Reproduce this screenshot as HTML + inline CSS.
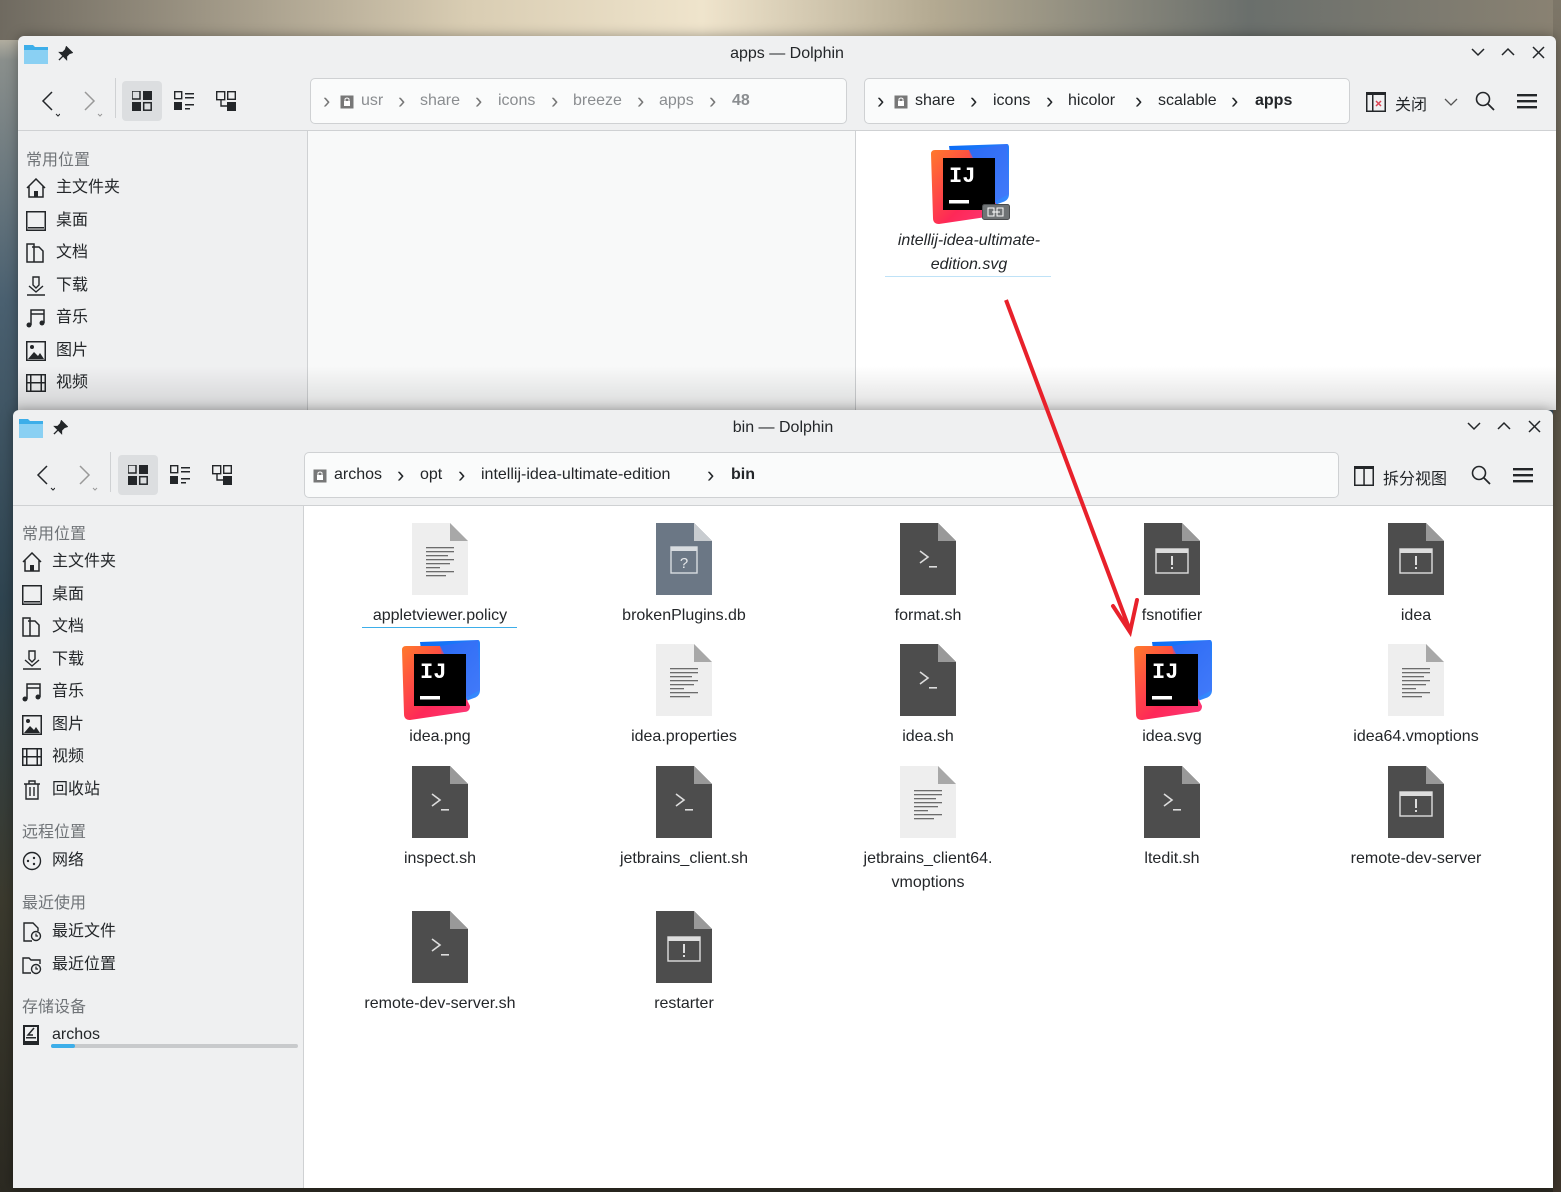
<!DOCTYPE html>
<html><head><meta charset="utf-8">
<style>
*{box-sizing:border-box;margin:0;padding:0}
body{width:1561px;height:1192px;overflow:hidden;position:relative;font-family:"Liberation Sans","Noto Sans CJK SC",sans-serif;color:#232629;
background:linear-gradient(180deg,#b9a78a 0px,#d8cbb2 20px,#8a8f8c 60px,#4a6070 300px,#2f4450 600px,#3b3a2e 900px,#2c2a22 1192px);}
.abs{position:absolute}
.win{position:absolute;background:#eff0f1;border-radius:6px 6px 0 0;overflow:hidden;box-shadow:0 0 12px rgba(0,0,0,.35)}
.title{position:absolute;left:0;right:0;top:0;height:36px;text-align:center;line-height:36px;font-size:16px;color:#232629}
.sec{position:absolute;font-size:16px;color:#707478}
.it{position:absolute;font-size:16px;color:#232629;height:24px;line-height:24px}
.it svg{position:absolute;left:-30px;top:2px}
.crumb{position:absolute;border:1px solid #cfd1d3;border-radius:5px;background:#fafbfb;font-size:16px}
.crumb span{position:absolute;top:13px}
.crumb span.chev{top:9px;font-size:22px;color:#777}
.lbl{position:absolute;width:240px;text-align:center;font-size:16px;color:#232629;line-height:24px}
.ic{position:absolute}
</style></head><body>
<svg width="0" height="0" style="position:absolute">
<defs>
<linearGradient id="gb" x1="0" y1="0" x2="1" y2="1"><stop offset="0" stop-color="#0b6cf5"/><stop offset="1" stop-color="#3c8dff"/></linearGradient>
<linearGradient id="gr" x1="0" y1="0" x2="1" y2="1"><stop offset="0" stop-color="#ff7a2b"/><stop offset=".6" stop-color="#fe2857"/><stop offset="1" stop-color="#fc3a7a"/></linearGradient>
<symbol id="ij" viewBox="0 0 80 80">
<path d="M20 2 L78 0 Q80 0 80 4 L80 50 Q80 56 74 58 L30 74 Z" fill="url(#gb)"/>
<path d="M2 10 Q2 6 6 6 L40 6 L70 66 Q70 72 64 72 L10 80 Q4 80 4 74 Z" fill="url(#gr)"/>
<path d="M40 6 L78 0 L80 50 L50 66 Z" fill="#5a5ff0" opacity=".35"/>
<rect x="14" y="14" width="52" height="52" fill="#000"/>
<text x="20" y="38" font-family="Liberation Mono,monospace" font-weight="bold" font-size="22" fill="#fff">IJ</text>
<rect x="20" y="56" width="20" height="3.5" fill="#fff"/>
</symbol>
<symbol id="txt" viewBox="0 0 56 72">
<path d="M0 0 H38 L56 18 V72 H0 Z" fill="#eeeeee"/><path d="M38 0 L56 18 H38 Z" fill="#a8a8a8"/>
<g fill="#6c6c6c"><rect x="14" y="24" width="28" height="1.3"/><rect x="14" y="28" width="28" height="1.3"/><rect x="14" y="32" width="22" height="1.3"/><rect x="14" y="36" width="28" height="1.3"/><rect x="14" y="40" width="24" height="1.3"/><rect x="14" y="44" width="14" height="1.3"/><rect x="14" y="48" width="28" height="1.3"/><rect x="14" y="52" width="20" height="1.3"/></g>
</symbol>
<symbol id="sh" viewBox="0 0 56 72">
<path d="M0 0 H38 L56 18 V72 H0 Z" fill="#4d4d4d"/><path d="M38 0 L56 18 H38 Z" fill="#999"/>
<path d="M20 28 L28 34 L20 40" stroke="#ddd" stroke-width="1.6" fill="none"/><rect x="29" y="43" width="8" height="1.6" fill="#ddd"/>
</symbol>
<symbol id="exe" viewBox="0 0 56 72">
<path d="M0 0 H38 L56 18 V72 H0 Z" fill="#4d4d4d"/><path d="M38 0 L56 18 H38 Z" fill="#999"/>
<rect x="12" y="26" width="32" height="24" fill="none" stroke="#ddd" stroke-width="1.4"/><rect x="12" y="26" width="32" height="4" fill="#ddd"/>
<rect x="27" y="33" width="2" height="9" fill="#ddd"/><rect x="27" y="44" width="2" height="2" fill="#ddd"/>
</symbol>
<symbol id="db" viewBox="0 0 56 72">
<path d="M0 0 H38 L56 18 V72 H0 Z" fill="#6b7785"/><path d="M38 0 L56 18 H38 Z" fill="#c8ccd0"/>
<rect x="15" y="24" width="26" height="26" fill="none" stroke="#d8dce0" stroke-width="1.4"/><rect x="15" y="24" width="26" height="4" fill="#d8dce0"/>
<text x="28" y="45" font-size="15" text-anchor="middle" fill="#e6e8ea" font-family="Liberation Sans">?</text>
</symbol>
<symbol id="folder" viewBox="0 0 24 20"><path d="M0 1 H9 L11 3 H24 V20 H0Z" fill="#3daee9"/><path d="M0 6 H24 V20 H0Z" fill="#8ad0f3"/></symbol>
<symbol id="pin" viewBox="0 0 16 16"><path d="M9 1 L15 7 L12 8 L9 11 L9 14 L2 7 L5 7 L8 4 Z M5 11 L1 15" stroke="#232629" stroke-width="1.5" fill="#232629"/></symbol>
<symbol id="iconsv" viewBox="0 0 20 20"><rect x="0" y="0" width="8" height="8" fill="none" stroke="#232629" stroke-width="1.5"/><rect x="11" y="0" width="9" height="9" fill="#232629"/><rect x="0" y="11" width="9" height="9" fill="#232629"/><rect x="11.7" y="11.7" width="7.5" height="7.5" fill="none" stroke="#232629" stroke-width="1.5"/></symbol>
<symbol id="compv" viewBox="0 0 20 20"><rect x=".7" y=".7" width="7" height="7" fill="none" stroke="#232629" stroke-width="1.4"/><rect x="0" y="11" width="8" height="8" fill="#232629"/><rect x="11" y="2" width="9" height="1.5" fill="#232629"/><rect x="11" y="6" width="9" height="1.5" fill="#232629"/><rect x="11" y="13" width="9" height="1.5" fill="#232629"/><rect x="11" y="17" width="5" height="1.5" fill="#232629"/></symbol>
<symbol id="treev" viewBox="0 0 20 20"><rect x=".7" y=".7" width="8" height="8" fill="none" stroke="#232629" stroke-width="1.4"/><rect x="11.7" y=".7" width="7.6" height="7.6" fill="none" stroke="#232629" stroke-width="1.4"/><rect x="11" y="11" width="9" height="9" fill="#232629"/><path d="M5 9 V15 H11" stroke="#232629" stroke-width="1.4" fill="none"/></symbol>
<symbol id="ham" viewBox="0 0 20 16"><rect y="1" width="20" height="2.4" fill="#232629"/><rect y="7" width="20" height="2.4" fill="#232629"/><rect y="13" width="20" height="2.4" fill="#232629"/></symbol>
<symbol id="srch" viewBox="0 0 20 20"><circle cx="8" cy="8" r="6.5" fill="none" stroke="#232629" stroke-width="1.6"/><path d="M13 13 L19 19" stroke="#232629" stroke-width="1.8"/></symbol>
<symbol id="lock" viewBox="0 0 14 14"><rect x=".5" y=".5" width="13" height="13" fill="#777"/><rect x="4" y="6" width="6" height="5" fill="#fff"/><path d="M5 6 V4 Q7 2 9 4 V6" stroke="#fff" fill="none"/></symbol>
<symbol id="home" viewBox="0 0 20 20"><path d="M1 10 L10 1 L19 10 M3 8 V19 H17 V8" stroke="#232629" stroke-width="1.5" fill="none"/><rect x="8" y="13" width="4" height="6" fill="#232629"/></symbol>
<symbol id="desk" viewBox="0 0 20 20"><rect x=".75" y=".75" width="18.5" height="18.5" fill="none" stroke="#232629" stroke-width="1.5"/><rect x="2" y="16" width="16" height="1.5" fill="#232629"/></symbol>
<symbol id="doc" viewBox="0 0 20 20"><path d="M1 1 H8 V19 H1Z M6 4 H13 L17 8 V19 H6" stroke="#232629" stroke-width="1.5" fill="none"/></symbol>
<symbol id="dl" viewBox="0 0 20 20"><path d="M7 1 H13 V9 L10 12 L7 9 Z M1 19 H19 M3 10 L10 16 L17 10" stroke="#232629" stroke-width="1.4" fill="none"/></symbol>
<symbol id="mus" viewBox="0 0 20 20"><path d="M5 17 V2 H18 V15 M5 6 H18" stroke="#232629" stroke-width="1.5" fill="none"/><circle cx="3" cy="17" r="2.5" fill="#232629"/><circle cx="16" cy="15" r="2.5" fill="#232629"/></symbol>
<symbol id="pic" viewBox="0 0 20 20"><rect x=".75" y=".75" width="18.5" height="18.5" fill="none" stroke="#232629" stroke-width="1.5"/><circle cx="6" cy="6" r="2" fill="#232629"/><path d="M2 18 L8 11 L12 15 L14 12 L18 18Z" fill="#232629"/></symbol>
<symbol id="vid" viewBox="0 0 20 20"><rect x=".75" y="1.75" width="18.5" height="16.5" fill="none" stroke="#232629" stroke-width="1.5"/><rect x="0" y="9" width="20" height="1.5" fill="#232629"/><rect x="4" y="1" width="1.5" height="18" fill="#232629"/><rect x="14.5" y="1" width="1.5" height="18" fill="#232629"/></symbol>
<symbol id="trash" viewBox="0 0 20 20"><path d="M4 4 V19 H16 V4 M2 4 H18 M7 4 V1 H13 V4 M8 7 V16 M12 7 V16" stroke="#232629" stroke-width="1.4" fill="none"/></symbol>
<symbol id="net" viewBox="0 0 20 20"><circle cx="10" cy="10" r="8.5" fill="none" stroke="#232629" stroke-width="1.4"/><circle cx="6" cy="10" r="1.2" fill="#232629"/><circle cx="12" cy="7" r="1.2" fill="#232629"/><circle cx="12" cy="13" r="1.2" fill="#232629"/></symbol>
<symbol id="recf" viewBox="0 0 20 20"><path d="M10 19 H2 V1 H11 L16 6 V9" stroke="#232629" stroke-width="1.4" fill="none"/><circle cx="14" cy="14" r="4.5" fill="none" stroke="#232629" stroke-width="1.4"/><path d="M14 11.5 V14 H16" stroke="#232629" stroke-width="1.2" fill="none"/></symbol>
<symbol id="recl" viewBox="0 0 20 20"><path d="M9 18 H1 V3 H7 L9 5 H18 V9" stroke="#232629" stroke-width="1.4" fill="none"/><circle cx="14" cy="14" r="4.5" fill="none" stroke="#232629" stroke-width="1.4"/><path d="M14 11.5 V14 H16" stroke="#232629" stroke-width="1.2" fill="none"/></symbol>
<symbol id="hdd" viewBox="0 0 18 22"><rect x="1" y="1" width="16" height="20" fill="#232629"/><rect x="3" y="3" width="12" height="14" fill="#eff0f1"/><path d="M12 4 L6 11 H11" stroke="#232629" stroke-width="1.5" fill="none"/><rect x="4" y="13" width="10" height="1.5" fill="#232629"/></symbol>
<symbol id="split" viewBox="0 0 20 20"><rect x=".75" y=".75" width="18.5" height="18.5" fill="none" stroke="#232629" stroke-width="1.5"/><rect x="9.3" y="0" width="1.5" height="20" fill="#232629"/><rect x="0" y="0" width="20" height="3" fill="#232629"/></symbol>
<symbol id="close2" viewBox="0 0 20 20"><rect x=".75" y=".75" width="18.5" height="18.5" fill="none" stroke="#232629" stroke-width="1.5"/><rect x="0" y="0" width="20" height="3" fill="#232629"/><rect x="6" y="0" width="1.5" height="20" fill="#232629"/><path d="M10 9 L15 14 M15 9 L10 14" stroke="#da4453" stroke-width="1.5"/></symbol>
</defs></svg>

<div class="abs" style="left:0;top:0;width:1561px;height:40px;background:linear-gradient(90deg,#6f6a60,#d9cdb3 30%,#efe4cc 45%,#b3a991 60%,#6a6f6c 80%,#8a8272);"></div>
<div class="abs" style="left:1553px;top:0;width:8px;height:1192px;background:linear-gradient(180deg,#7d7668,#5d574a 400px,#5b5040 800px,#3d352b)"></div>

<!-- WINDOW 1 -->
<div class="win" style="left:18px;top:36px;width:1538px;height:374px;">
  <svg class="abs" style="left:6px;top:8px" width="24" height="20"><use href="#folder"/></svg>
  <svg class="abs" style="left:40px;top:10px" width="15" height="15"><use href="#pin"/></svg>
  <div class="title">apps — Dolphin</div>
  <svg class="abs" style="left:1453px;top:12px" width="14" height="10"><path d="M1 1 L7 7 L13 1" stroke="#232629" stroke-width="1.5" fill="none"/></svg>
  <svg class="abs" style="left:1483px;top:10px" width="14" height="12"><path d="M1 9 L7 3 L13 9" stroke="#232629" stroke-width="1.5" fill="none"/></svg>
  <svg class="abs" style="left:1514px;top:10px" width="13" height="13"><path d="M1 1 L12 12 M12 1 L1 12" stroke="#232629" stroke-width="1.5"/></svg>
  <svg class="abs" style="left:22px;top:54px" width="20" height="30"><path d="M12 2 L3 11 L12 20" stroke="#232629" stroke-width="1.5" fill="none"/><path d="M16 24 L18 26 L20 24" stroke="#232629" fill="none"/></svg>
  <svg class="abs" style="left:64px;top:54px" width="22" height="30"><path d="M3 2 L12 11 L3 20" stroke="#999" stroke-width="1.5" fill="none"/><path d="M16 24 L18 26 L20 24" stroke="#999" fill="none"/></svg>
  <div class="abs" style="left:97px;top:42px;width:1px;height:40px;background:#cfd1d3"></div>
  <div class="abs" style="left:104px;top:45px;width:40px;height:40px;background:#dcdee0;border-radius:4px"></div>
  <svg class="abs" style="left:114px;top:55px" width="20" height="20"><use href="#iconsv"/></svg>
  <svg class="abs" style="left:156px;top:55px" width="20" height="20"><use href="#compv"/></svg>
  <svg class="abs" style="left:198px;top:55px" width="20" height="20"><use href="#treev"/></svg>
  <div class="crumb" style="left:292px;top:42px;width:537px;height:46px;color:#8a8d90">
    <span class="chev" style="left:12px">›</span><svg class="abs" style="left:29px;top:16px" width="14" height="14"><use href="#lock"/></svg>
    <span style="left:50px">usr</span><span class="chev" style="left:87px">›</span><span style="left:109px">share</span><span class="chev" style="left:164px">›</span><span style="left:187px">icons</span><span class="chev" style="left:240px">›</span><span style="left:262px">breeze</span><span class="chev" style="left:326px">›</span><span style="left:348px">apps</span><span class="chev" style="left:398px">›</span><span style="left:421px;font-weight:bold">48</span>
  </div>
  <div class="crumb" style="left:846px;top:42px;width:486px;height:46px;color:#232629">
    <span class="chev" style="left:12px;color:#232629">›</span><svg class="abs" style="left:29px;top:16px" width="14" height="14"><use href="#lock"/></svg>
    <span style="left:50px">share</span><span class="chev" style="left:105px;color:#232629">›</span><span style="left:128px">icons</span><span class="chev" style="left:181px;color:#232629">›</span><span style="left:203px">hicolor</span><span class="chev" style="left:270px;color:#232629">›</span><span style="left:293px">scalable</span><span class="chev" style="left:366px;color:#232629">›</span><span style="left:390px;font-weight:bold">apps</span>
  </div>
  <svg class="abs" style="left:1348px;top:56px" width="20" height="20"><use href="#close2"/></svg>
  <div class="abs" style="left:1377px;top:55px;font-size:16px">关闭</div>
  <svg class="abs" style="left:1426px;top:62px" width="14" height="9"><path d="M1 1 L7 7 L13 1" stroke="#555" stroke-width="1.3" fill="none"/></svg>
  <svg class="abs" style="left:1457px;top:55px" width="20" height="20"><use href="#srch"/></svg>
  <svg class="abs" style="left:1499px;top:57px" width="20" height="16"><use href="#ham"/></svg>
  <div class="abs" style="left:0;top:94px;width:1538px;height:1px;background:#cfd1d3"></div>
  <div class="sec" style="left:8px;top:110px">常用位置</div>
  <div class="it" style="left:38px;top:140px"><svg width="20" height="20"><use href="#home"/></svg>主文件夹</div>
  <div class="it" style="left:38px;top:173px"><svg width="20" height="20"><use href="#desk"/></svg>桌面</div>
  <div class="it" style="left:38px;top:205px"><svg width="20" height="20"><use href="#doc"/></svg>文档</div>
  <div class="it" style="left:38px;top:238px"><svg width="20" height="20"><use href="#dl"/></svg>下载</div>
  <div class="it" style="left:38px;top:270px"><svg width="20" height="20"><use href="#mus"/></svg>音乐</div>
  <div class="it" style="left:38px;top:303px"><svg width="20" height="20"><use href="#pic"/></svg>图片</div>
  <div class="it" style="left:38px;top:335px"><svg width="20" height="20"><use href="#vid"/></svg>视频</div>
  <div class="abs" style="left:289px;top:95px;width:1px;height:279px;background:#cfd1d3"></div>
  <div class="abs" style="left:290px;top:95px;width:547px;height:279px;background:#f8f9f9"></div>
  <div class="abs" style="left:837px;top:95px;width:1px;height:279px;background:#cfd1d3"></div>
  <div class="abs" style="left:838px;top:95px;width:700px;height:279px;background:#fff"></div>
  <svg class="ic" style="left:911px;top:108px" width="80" height="80"><use href="#ij"/></svg>
  <svg class="abs" style="left:964px;top:168px" width="28" height="16"><rect x=".5" y=".5" width="27" height="15" rx="2" fill="#6f7375" stroke="#4a4d4f"/><rect x="6" y="4" width="6" height="8" fill="none" stroke="#fff"/><rect x="15" y="4" width="6" height="8" fill="none" stroke="#fff"/><path d="M10 8 H18" stroke="#fff"/></svg>
  <div class="lbl" style="left:831px;top:193px;font-style:italic;width:240px">intellij-idea-ultimate-<br>edition.svg</div>
  <div class="abs" style="left:867px;top:240px;width:166px;height:1px;background:#bfe2f7"></div>
  <div class="abs" style="left:0;top:330px;width:1538px;height:44px;background:linear-gradient(180deg,rgba(0,0,0,0),rgba(0,0,0,.12))"></div>
</div>

<!-- WINDOW 2 -->
<div class="win" style="left:13px;top:410px;width:1540px;height:778px;">
  <svg class="abs" style="left:6px;top:8px" width="24" height="20"><use href="#folder"/></svg>
  <svg class="abs" style="left:40px;top:10px" width="15" height="15"><use href="#pin"/></svg>
  <div class="title">bin — Dolphin</div>
  <svg class="abs" style="left:1454px;top:12px" width="14" height="10"><path d="M1 1 L7 7 L13 1" stroke="#232629" stroke-width="1.5" fill="none"/></svg>
  <svg class="abs" style="left:1484px;top:10px" width="14" height="12"><path d="M1 9 L7 3 L13 9" stroke="#232629" stroke-width="1.5" fill="none"/></svg>
  <svg class="abs" style="left:1515px;top:10px" width="13" height="13"><path d="M1 1 L12 12 M12 1 L1 12" stroke="#232629" stroke-width="1.5"/></svg>
  <svg class="abs" style="left:22px;top:54px" width="20" height="30"><path d="M12 2 L3 11 L12 20" stroke="#232629" stroke-width="1.5" fill="none"/><path d="M16 24 L18 26 L20 24" stroke="#232629" fill="none"/></svg>
  <svg class="abs" style="left:64px;top:54px" width="22" height="30"><path d="M3 2 L12 11 L3 20" stroke="#999" stroke-width="1.5" fill="none"/><path d="M16 24 L18 26 L20 24" stroke="#999" fill="none"/></svg>
  <div class="abs" style="left:97px;top:42px;width:1px;height:40px;background:#cfd1d3"></div>
  <div class="abs" style="left:105px;top:45px;width:40px;height:40px;background:#dcdee0;border-radius:4px"></div>
  <svg class="abs" style="left:115px;top:55px" width="20" height="20"><use href="#iconsv"/></svg>
  <svg class="abs" style="left:157px;top:55px" width="20" height="20"><use href="#compv"/></svg>
  <svg class="abs" style="left:199px;top:55px" width="20" height="20"><use href="#treev"/></svg>
  <div class="crumb" style="left:291px;top:42px;width:1035px;height:46px;color:#232629">
    <svg class="abs" style="left:8px;top:16px" width="14" height="14"><use href="#lock"/></svg>
    <span style="left:29px">archos</span><span class="chev" style="left:92px;color:#232629">›</span><span style="left:115px">opt</span><span class="chev" style="left:153px;color:#232629">›</span><span style="left:176px">intellij-idea-ultimate-edition</span><span class="chev" style="left:402px;color:#232629">›</span><span style="left:426px;font-weight:bold">bin</span>
  </div>
  <svg class="abs" style="left:1341px;top:56px" width="20" height="20"><use href="#split"/></svg>
  <div class="abs" style="left:1370px;top:55px;font-size:16px">拆分视图</div>
  <svg class="abs" style="left:1458px;top:55px" width="20" height="20"><use href="#srch"/></svg>
  <svg class="abs" style="left:1500px;top:57px" width="20" height="16"><use href="#ham"/></svg>
  <div class="abs" style="left:0;top:95px;width:1540px;height:1px;background:#cfd1d3"></div>
  <div class="sec" style="left:9px;top:110px">常用位置</div>
  <div class="it" style="left:39px;top:140px"><svg width="20" height="20"><use href="#home"/></svg>主文件夹</div>
  <div class="it" style="left:39px;top:173px"><svg width="20" height="20"><use href="#desk"/></svg>桌面</div>
  <div class="it" style="left:39px;top:205px"><svg width="20" height="20"><use href="#doc"/></svg>文档</div>
  <div class="it" style="left:39px;top:238px"><svg width="20" height="20"><use href="#dl"/></svg>下载</div>
  <div class="it" style="left:39px;top:270px"><svg width="20" height="20"><use href="#mus"/></svg>音乐</div>
  <div class="it" style="left:39px;top:303px"><svg width="20" height="20"><use href="#pic"/></svg>图片</div>
  <div class="it" style="left:39px;top:335px"><svg width="20" height="20"><use href="#vid"/></svg>视频</div>
  <div class="it" style="left:39px;top:368px"><svg width="20" height="20"><use href="#trash"/></svg>回收站</div>
  <div class="sec" style="left:9px;top:408px">远程位置</div>
  <div class="it" style="left:39px;top:439px"><svg width="20" height="20"><use href="#net"/></svg>网络</div>
  <div class="sec" style="left:9px;top:479px">最近使用</div>
  <div class="it" style="left:39px;top:510px"><svg width="20" height="20"><use href="#recf"/></svg>最近文件</div>
  <div class="it" style="left:39px;top:543px"><svg width="20" height="20"><use href="#recl"/></svg>最近位置</div>
  <div class="sec" style="left:9px;top:583px">存储设备</div>
  <div class="it" style="left:39px;top:613px"><svg width="18" height="22" style="top:1px"><use href="#hdd"/></svg>archos</div>
  <div class="abs" style="left:38px;top:634px;width:247px;height:4px;border-radius:2px;background:#c8cacc"></div>
  <div class="abs" style="left:38px;top:634px;width:24px;height:4px;border-radius:2px;background:#3daee9"></div>
  <div class="abs" style="left:290px;top:96px;width:1px;height:682px;background:#cfd1d3"></div>
  <div class="abs" style="left:291px;top:96px;width:1249px;height:682px;background:#fff"></div>
</div>

<svg class="ic" style="left:412px;top:523px" width="56" height="72"><use href="#txt"/></svg>
<div class="lbl" style="left:320px;top:604px">appletviewer.policy</div>
<div class="abs" style="left:362px;top:627px;width:155px;height:1px;background:#3daee9"></div>
<svg class="ic" style="left:656px;top:523px" width="56" height="72"><use href="#db"/></svg>
<div class="lbl" style="left:564px;top:604px">brokenPlugins.db</div>
<svg class="ic" style="left:900px;top:523px" width="56" height="72"><use href="#sh"/></svg>
<div class="lbl" style="left:808px;top:604px">format.sh</div>
<svg class="ic" style="left:1144px;top:523px" width="56" height="72"><use href="#exe"/></svg>
<div class="lbl" style="left:1052px;top:604px">fsnotifier</div>
<svg class="ic" style="left:1388px;top:523px" width="56" height="72"><use href="#exe"/></svg>
<div class="lbl" style="left:1296px;top:604px">idea</div>

<svg class="ic" style="left:400px;top:640px" width="80" height="80"><use href="#ij"/></svg>
<div class="lbl" style="left:320px;top:725px">idea.png</div>
<svg class="ic" style="left:656px;top:644px" width="56" height="72"><use href="#txt"/></svg>
<div class="lbl" style="left:564px;top:725px">idea.properties</div>
<svg class="ic" style="left:900px;top:644px" width="56" height="72"><use href="#sh"/></svg>
<div class="lbl" style="left:808px;top:725px">idea.sh</div>
<svg class="ic" style="left:1132px;top:640px" width="80" height="80"><use href="#ij"/></svg>
<div class="lbl" style="left:1052px;top:725px">idea.svg</div>
<svg class="ic" style="left:1388px;top:644px" width="56" height="72"><use href="#txt"/></svg>
<div class="lbl" style="left:1296px;top:725px">idea64.vmoptions</div>

<svg class="ic" style="left:412px;top:766px" width="56" height="72"><use href="#sh"/></svg>
<div class="lbl" style="left:320px;top:847px">inspect.sh</div>
<svg class="ic" style="left:656px;top:766px" width="56" height="72"><use href="#sh"/></svg>
<div class="lbl" style="left:564px;top:847px">jetbrains_client.sh</div>
<svg class="ic" style="left:900px;top:766px" width="56" height="72"><use href="#txt"/></svg>
<div class="lbl" style="left:808px;top:847px">jetbrains_client64.<br>vmoptions</div>
<svg class="ic" style="left:1144px;top:766px" width="56" height="72"><use href="#sh"/></svg>
<div class="lbl" style="left:1052px;top:847px">ltedit.sh</div>
<svg class="ic" style="left:1388px;top:766px" width="56" height="72"><use href="#exe"/></svg>
<div class="lbl" style="left:1296px;top:847px">remote-dev-server</div>

<svg class="ic" style="left:412px;top:911px" width="56" height="72"><use href="#sh"/></svg>
<div class="lbl" style="left:320px;top:992px">remote-dev-server.sh</div>
<svg class="ic" style="left:656px;top:911px" width="56" height="72"><use href="#exe"/></svg>
<div class="lbl" style="left:564px;top:992px">restarter</div>

<svg class="abs" style="left:0;top:0" width="1561" height="1192">
<path d="M1006 300 L1129 628" stroke="#e8212b" stroke-width="4" fill="none"/>
<path d="M1113 606 L1130 632 L1137 600" stroke="#e8212b" stroke-width="4" fill="none" stroke-linecap="round"/>
</svg>
</body></html>
